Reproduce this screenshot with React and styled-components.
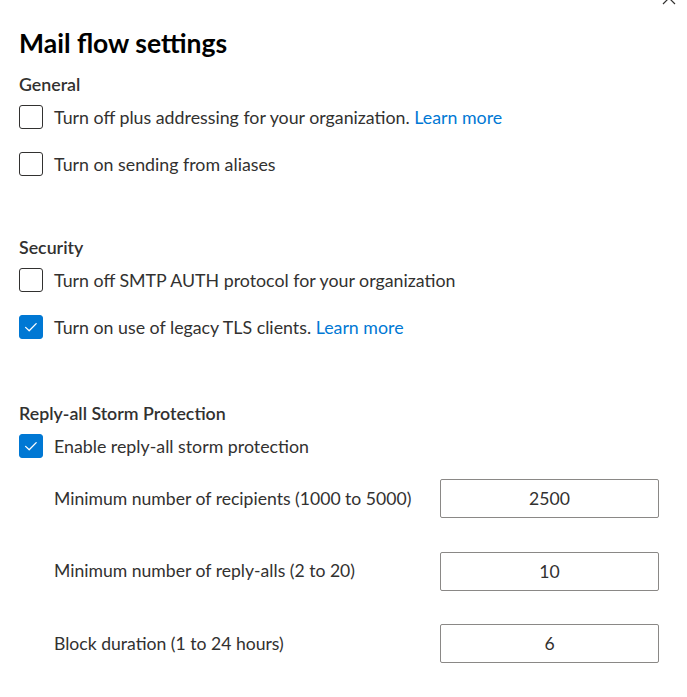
import styled, { createGlobalStyle } from "styled-components"

const TEXT = "#323130"
const BLUE = "#0078d4"
const BORDER = "#8a8886"

const GlobalStyle = createGlobalStyle`
    html, body {
        margin: 0;
        padding: 0;
        background: #ffffff;
    }
    body {
        font-family: "Segoe UI", Lato, "Noto Sans", sans-serif;
        color: ${TEXT};
    }
`

const sections = [
    {
        title: "General",
        gap: 0,
        items: [
            { label: "Turn off plus addressing for your organization.", link: true, checked: false },
            { label: "Turn on sending from aliases", checked: false },
        ],
    },
    {
        title: "Security",
        gap: 59,
        items: [
            { label: "Turn off SMTP AUTH protocol for your organization", checked: false },
            { label: "Turn on use of legacy TLS clients.", link: true, checked: true },
        ],
    },
]

const fields = [
    { label: "Minimum number of recipients (1000 to 5000)", value: "2500" },
    { label: "Minimum number of reply-alls (2 to 20)", value: "10" },
    { label: "Block duration (1 to 24 hours)", value: "6" },
]

function Checkbox({ checked }) {
    return (
        <Box checked={checked}>
            {checked && (
                <svg width="16" height="16" viewBox="0 0 16 16">
                    <path d="M2.6 8.4 L6.2 11.8 L13.2 4.6" fill="none" stroke="#fff" strokeWidth="1.3" strokeLinecap="round" strokeLinejoin="round" />
                </svg>
            )}
        </Box>
    )
}

function CheckRow({ item }) {
    return (
        <Row>
            <Checkbox checked={item.checked} />
            <RowText>
                {item.label}
                {item.link && <> <Link>Learn more</Link></>}
            </RowText>
        </Row>
    )
}

export default function App() {
    return (
        <>
            <GlobalStyle />
            <Panel>
                <Close>
                    <svg width="14" height="14" viewBox="0 0 14 14">
                        <path d="M1 1 L13 13 M13 1 L1 13" stroke={TEXT} strokeWidth="1.2" />
                    </svg>
                </Close>
                <Title>Mail flow settings</Title>
                {sections.map((s) => (
                    <Section key={s.title} gap={s.gap}>
                        <SectionTitle>{s.title}</SectionTitle>
                        <CheckList>
                            {s.items.map((it) => <CheckRow key={it.label} item={it} />)}
                        </CheckList>
                    </Section>
                ))}
                <Section gap={62}>
                    <SectionTitle>Reply-all Storm Protection</SectionTitle>
                    <CheckList>
                        <CheckRow item={{ label: "Enable reply-all storm protection", checked: true }} />
                    </CheckList>
                    <Fields>
                        {fields.map((f) => (
                            <FieldRow key={f.label}>
                                <FieldLabel>{f.label}</FieldLabel>
                                <Input defaultValue={f.value} />
                            </FieldRow>
                        ))}
                    </Fields>
                </Section>
            </Panel>
        </>
    )
}

const Panel = styled.div`
    position: relative;
    padding: 27px 28px 20px 19px;
    width: 687px;
    height: 697px;
    box-sizing: border-box;
    overflow: hidden;
`
const Close = styled.div`
    position: absolute;
    left: 662px;
    top: -11px;
    width: 14px;
    height: 14px;
`
const Title = styled.div`
    font-size: 26.5px;
    font-weight: 700;
    line-height: 32px;
    color: #000;
    margin-bottom: 13px;
`
const Section = styled.div`
    margin-top: ${(p) => p.gap}px;
`
const SectionTitle = styled.div`
    font-size: 17.8px;
    font-weight: 600;
    line-height: 24px;
    color: ${TEXT};
`
const CheckList = styled.div`
    margin-top: 9px;
    display: flex;
    flex-direction: column;
    gap: 23px;
`
const Row = styled.div`
    display: flex;
    align-items: center;
    gap: 11px;
    height: 24px;
`
const Box = styled.div`
    width: 24px;
    height: 24px;
    box-sizing: border-box;
    border-radius: 3px;
    border: 1px solid ${(p) => (p.checked ? BLUE : TEXT)};
    background: ${(p) => (p.checked ? BLUE : "#fff")};
    display: flex;
    align-items: center;
    justify-content: center;
    flex-shrink: 0;
`
const RowText = styled.div`
    font-size: 17.8px;
    line-height: 24px;
    color: ${TEXT};
`
const Link = styled.span`
    color: ${BLUE};
`
const Fields = styled.div`
    margin-top: 21px;
    padding-left: 35px;
    display: flex;
    flex-direction: column;
    gap: 33.5px;
`
const FieldRow = styled.div`
    display: flex;
    align-items: center;
    justify-content: space-between;
    height: 39px;
`
const FieldLabel = styled.div`
    font-size: 17.6px;
    line-height: 24px;
    color: ${TEXT};
`
const Input = styled.input`
    width: 219px;
    height: 39px;
    box-sizing: border-box;
    border: 1px solid ${BORDER};
    border-radius: 2px;
    text-align: center;
    font-family: inherit;
    font-size: 17.6px;
    color: ${TEXT};
    outline: none;
    padding: 0 8px;
`
